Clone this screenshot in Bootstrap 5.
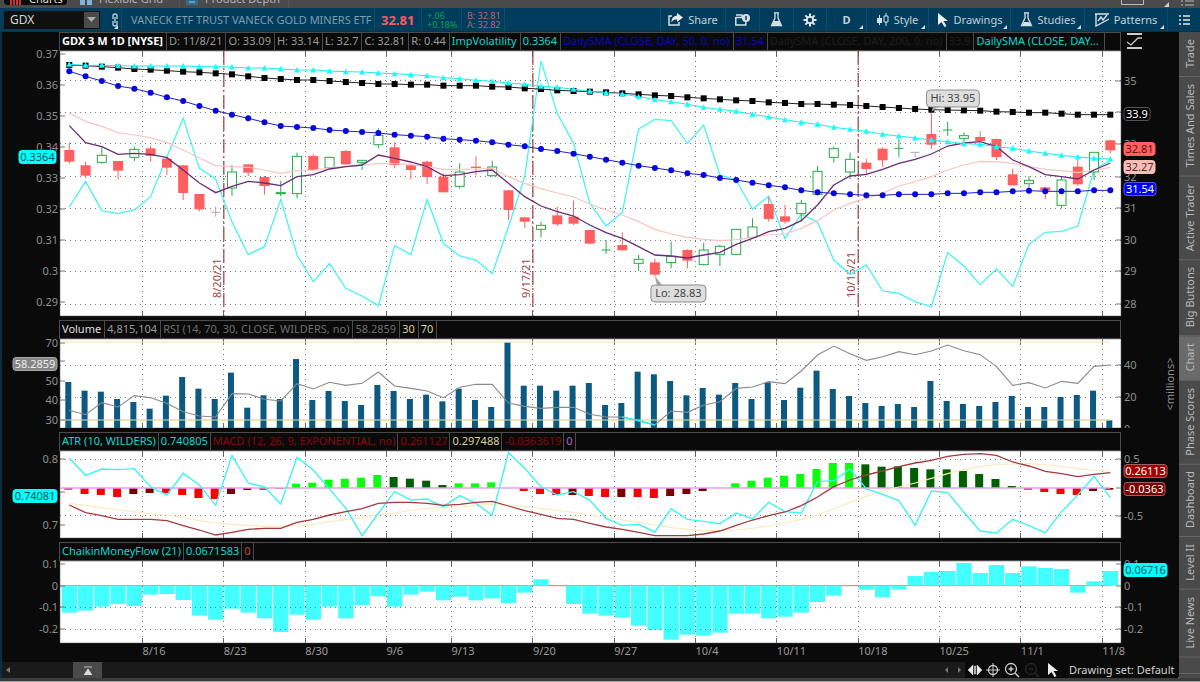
<!DOCTYPE html>
<html lang="en">
<head>
<meta charset="utf-8">
<meta name="viewport" content="width=device-width, initial-scale=1">
<title>GDX Charts</title>
<link href="https://cdn.jsdelivr.net/npm/bootstrap@5.3.0/dist/css/bootstrap.min.css" rel="stylesheet">
<style>
  body { background:#0a0a0a; color:#9a9a9a; font-family:"Noto Sans","Open Sans",sans-serif; font-size:11px; line-height:14px; }
  button { font:inherit; color:inherit; background:none; border:0; padding:0; }
  svg { display:block; flex-shrink:0; }
  .tabstrip { height:8px; background:#4a4a4a; color:#b5b5b5; font-size:11px; line-height:12px; }
  .tabstrip button { height:16px; padding:0 8px 3px 6px; gap:7px; border-right:1px solid #555; }
  .tabstrip .chart-tab { background:#0a0a0a; color:#ddd; border-radius:0 0 4px 4px; width:64px; margin:0 12px 3px 4px; padding-bottom:0; }
  .tabstrip .grid-tab { padding:0 16px 3px 0; }
  .toolbar { height:24px; background:#003d5c; color:#c3d0d8; border-bottom:1px solid #1d2b33; }
  .toolbar .cell { border-left:1px solid #0b4d6d; height:23px; }
  .symbol { width:96px; height:18px; background:#101010; margin:0 8px 0 4px; }
  .symbol input { width:80px; background:none; border:0; outline:0; color:#d5d5d5; font-size:12px; padding:0 0 0 6px; }
  .symbol button { width:15px; height:16px; background:#4a4a4a; margin-right:1px; }
  .company { color:#7f9cad; padding-left:9px; width:253px; }
  .lastprice { color:#ff5a64; font-size:13px; width:47px; padding-left:6px; }
  .two-line { font-size:9px; line-height:9px; padding-left:5px; }
  .w40 { width:40px; } .w43 { width:43px; }
  .up { color:#08a34c; } .quote { color:#c0606f; }
  .tool { position:relative; gap:5px; }
  .drop::after, .drop-mark { content:""; border:2px solid transparent; border-right-color:#d8e0e4; border-bottom-color:#d8e0e4; }
  .drop::after { position:absolute; right:3px; bottom:2px; }
  .t13 { width:13px; } .t33 { width:33px; } .t34 { width:34px; } .t40 { width:40px; } .t62 { width:62px; } .t65 { width:65px; }
  .t74 { width:74px; } .t82 { width:82px; } .t83 { width:83px; }
  .charts { border-left:2px solid #04303f; position:relative; }
  .strip { height:19px; margin:0 58px 0 57px; border:1px solid #4b4b4b; background:#0a0a0a; white-space:nowrap; overflow:hidden; line-height:16px; }
  .strip span { padding:0 2px; border-right:1px solid #4b4b4b; flex-shrink:0; overflow:hidden; text-overflow:ellipsis; }
  .strip-roomy span { padding-right:3px; }
  .plot { min-height:0; margin-bottom:4px; }
  .plot svg { width:100%; height:100%; }
  .plot-price { flex:265 1 0; } .plot-volume { flex:89 1 0; } .plot-macd { flex:87 1 0; } .plot-flow { flex:82 1 0; margin:0; }
  .plot-price svg, .plot-macd svg, .plot-flow svg { overflow:visible; }
  .dates { height:19px; } .dates svg { width:100%; height:19px; }
  .white { color:#fff; } .bold { font-weight:700; } .pale { color:#e0dfe2; } .aqua { color:#12d5d0; } .navy { color:#0808b8; }
  .ink { color:#1e1e1e; } .dim { color:#6e6e6e; } .cream { color:#d9d09a; } .wine { color:#860a0a; } .orchid { color:#b05fd0; } .brick { color:#c04848; }
  .w-sma { width:131px; }
  .sidetabs { width:21px; background:#4a4a4a; color:#b8b8b8; overflow:hidden; }
  .sidetabs button { writing-mode:vertical-rl; transform:rotate(180deg); width:21px; padding:8px 0 7px; border-top:1px solid #666; line-height:20px; white-space:nowrap; flex-shrink:0; }
  .sidetabs .current { background:#6a6a6a; }
  .footbar { height:16px; color:#cfcfcf; }
  .scroller { background:#1a1a1a; height:16px; padding-left:4px; }
  .scroller .thumb { width:29px; height:16px; background:#4a4a4a; margin-left:63px; }
  .draw-tools { gap:4px; padding:0 2px 0 3px; width:214px; }
  .baseline { height:4px; background:#3c3c3c; border-bottom:1px solid #9a9a9a; }
  text { font-family:"Noto Sans","Open Sans",sans-serif; font-size:11px; }
</style>
</head>
<body>
<div class="d-flex flex-column vh-100 overflow-hidden">
  <div class="tabstrip d-flex align-items-end overflow-hidden">
    <button class="chart-tab d-flex align-items-end"><svg width="12" height="12"><path d="M1 12V6M4 12V3M7 12V5M10 12V2" stroke="#c33" stroke-width="2"/></svg>Charts</button>
    <button class="grid-tab d-flex align-items-end"><svg width="12" height="12"><path d="M0 0h5v5H0zM7 0h5v5H7zM0 7h5v5H0zM7 7h5v5H7z" fill="#7fb0d8"/></svg>Flexible Grid</button>
    <button class="d-flex align-items-end"><svg width="12" height="12"><path d="M0 0h12v12H0z" fill="#2b6f93"/><path d="M3 6h6M3 9h6" stroke="#9cc"/></svg>Product Depth</button>
    <div class="ms-auto d-flex align-items-end h-100">
      <svg width="88" height="8"><path d="M9.500 0V4.500H31.500V0" fill="none" stroke="#bbb"/><path d="M57 2V7H52z" fill="#ccc"/><path d="M69 1h2M69 5h2M73 1h9M73 5h9" stroke="#bbb"/></svg>
    </div>
  </div>

  <div class="toolbar d-flex align-items-center flex-shrink-0">
    <div class="symbol d-flex align-items-center"><input aria-label="Symbol" value="GDX"><button aria-label="Symbol list" class="d-flex align-items-center justify-content-center"><svg width="9" height="5"><path d="M0 0H9L4.500 5z" fill="#aaa"/></svg></button></div>
    <button class="tool drop t13 h-100 d-flex justify-content-center align-items-center" aria-label="Link"><svg width="8" height="14"><path d="M2 6V2q2-2 4 0v4M2 8v4q2 2 4 0V8M4 4v6" fill="none" stroke="#b9c9d2" stroke-width="1.400"/></svg></button>
    <div class="company cell d-flex align-items-center text-nowrap">VANECK ETF TRUST VANECK GOLD MINERS ETF</div>
    <div class="lastprice cell d-flex align-items-center bold">32.81</div>
    <div class="two-line cell w40 up d-flex flex-column justify-content-center"><span>+.06</span><span>+0.18%</span></div>
    <div class="two-line cell w43 quote d-flex flex-column justify-content-center"><span>B: 32.81</span><span>A: 32.82</span></div>
    <div class="cell flex-grow-1"></div>
    <button class="tool cell t65 d-flex align-items-center justify-content-center"><svg width="15" height="13"><path d="M4 3H1v9h10V9" fill="none" stroke="#d6dfe4" stroke-width="1.500"/><path d="M9 0l6 4.500L9 9V6.500Q5 6 3.500 9.500 3.500 3 9 2.500z" fill="#e4eaed"/></svg>Share</button>
    <button class="tool cell t34 d-flex align-items-center justify-content-center" aria-label="Calendar"><svg width="15" height="12"><path d="M1 3.500h7M1 1h6v2M.8 3v8h10V8" fill="none" stroke="#d6dfe4" stroke-width="1.500"/><circle cx="11" cy="4" r="4" fill="#d6dfe4"/><path d="M11 2v4" stroke="#003d5c" stroke-width="1.500"/></svg></button>
    <button class="tool cell t34 d-flex align-items-center justify-content-center" aria-label="Studies setup"><svg width="13" height="15"><path d="M4 .8h5M5 1v5L1.500 13.500h10L8 6V1" fill="none" stroke="#d6dfe4" stroke-width="1.300"/><path d="M4 9h5l2 4H2z" fill="#d6dfe4"/></svg></button>
    <button class="tool cell t33 d-flex align-items-center justify-content-center" aria-label="Settings"><svg width="14" height="14" viewBox="-7 -7 14 14"><path d="M0-6.500V6.500M-6.500 0H6.500M-4.600-4.600L4.600 4.600M4.600-4.600L-4.600 4.600" stroke="#e4eaed" stroke-width="2"/><circle r="4" fill="#e4eaed"/><circle r="2.300" fill="#003d5c"/></svg></button>
    <button class="tool drop cell t40 bold d-flex align-items-center justify-content-center">D</button>
    <button class="tool drop cell t62 d-flex align-items-center justify-content-center"><svg width="12" height="13"><path d="M2.500 2v10M9 0v13" stroke="#d6dfe4"/><path d="M0 5h5v5H0z" fill="#d6dfe4"/><path d="M7 3h4v6H7z" fill="#003d5c" stroke="#d6dfe4"/></svg>Style</button>
    <button class="tool drop cell t82 d-flex align-items-center justify-content-center"><svg width="12" height="14"><path d="M1 0l10 8H6.500l3 5-2 1-3-5L1 12z" fill="#eef2f4"/></svg>Drawings</button>
    <button class="tool drop cell t74 d-flex align-items-center justify-content-center"><svg width="13" height="15"><path d="M4 .8h5M5 1v5L1.500 13.500h10L8 6V1" fill="none" stroke="#d6dfe4" stroke-width="1.300"/><path d="M4 10h5l2 3H2z" fill="#d6dfe4"/></svg>Studies</button>
    <button class="tool drop cell t83 d-flex align-items-center justify-content-center"><svg width="14" height="14"><path d="M0 1h14M1 1v12L14 6M3 8l3-4 2 3 4-5" fill="none" stroke="#d6dfe4" stroke-width="1.400"/></svg>Patterns</button>
    <button class="tool cell t33 d-flex align-items-center justify-content-center" aria-label="Menu"><svg width="11" height="10"><path d="M0 1h2M0 5h2M0 9h2M4 1h7M4 5h7M4 9h7" stroke="#e4eaed" stroke-width="1.500"/></svg></button>
  </div>

  <div class="d-flex flex-grow-1 overflow-hidden">
    <div class="charts d-flex flex-column flex-grow-1 overflow-hidden">
      <div class="strip strip-roomy d-flex"><span class="white bold">GDX 3 M 1D [NYSE]</span><span>D: 11/8/21</span><span>O: 33.09</span><span>H: 33.14</span><span>L: 32.7</span><span>C: 32.81</span><span>R: 0.44</span><span class="aqua">ImpVolatility</span><span class="aqua">0.3364</span><span class="navy">DailySMA (CLOSE, DAY, 50, 0, no)</span><span class="navy">31.54</span><span class="ink">DailySMA (CLOSE, DAY, 200, 0, no)</span><span class="ink">33.9</span><span class="aqua w-sma">DailySMA (CLOSE, DAY, 100, 0, no)</span></div>
      <div class="plot plot-price"><svg id="price"></svg></div>
      <div class="strip strip-roomy d-flex"><span class="pale">Volume</span><span>4,815,104</span><span class="dim">RSI (14, 70, 30, CLOSE, WILDERS, no)</span><span class="dim">58.2859</span><span class="cream">30</span><span class="cream">70</span></div>
      <div class="plot plot-volume"><svg id="volume"></svg></div>
      <div class="strip d-flex"><span class="aqua">ATR (10, WILDERS)</span><span class="aqua">0.740805</span><span class="wine">MACD (12, 26, 9, EXPONENTIAL, no)</span><span class="wine">0.261127</span><span class="cream">0.297488</span><span class="wine">-0.0363619</span><span class="orchid">0</span></div>
      <div class="plot plot-macd"><svg id="macd"></svg></div>
      <div class="strip d-flex"><span class="aqua">ChaikinMoneyFlow (21)</span><span class="aqua">0.0671583</span><span class="brick">0</span></div>
      <div class="plot plot-flow"><svg id="flow"></svg></div>
      <div class="dates"><svg id="dates"></svg></div>
      <div class="footbar d-flex align-items-center">
        <div class="scroller flex-grow-1 d-flex align-items-center">
          <svg width="4" height="6"><path d="M4 0v6L0 3z" fill="#777"/></svg>
          <button class="thumb d-flex align-items-center justify-content-center" aria-label="Expand"><svg width="8" height="9"><path d="M0 1h8M4 3l4 6H0z" fill="#ddd" stroke="#ddd" stroke-width=".8"/></svg></button>
          <svg class="ms-auto me-1" width="16" height="6"><path d="M3 0v6L0 3zM13 0v6l3-3z" fill="#777"/></svg>
        </div>
        <div class="draw-tools d-flex align-items-center text-nowrap">
          <svg width="14" height="10"><path d="M0 5l5-5v10zM14 5L9 0v10zM6.500 1h1v8h-1z" fill="#e8e8e8" stroke="#e8e8e8" stroke-width=".5"/></svg>
          <svg width="14" height="14"><path d="M7 0v14M0 7h14" stroke="#ccc"/><circle cx="7" cy="7" r="4.500" fill="none" stroke="#ccc" stroke-width="1.300"/></svg>
          <svg width="16" height="16"><circle cx="7" cy="7" r="5.500" fill="none" stroke="#ccc" stroke-width="1.300"/><path d="M4.500 7h5M7 4.500v5M11 11l4 4" stroke="#ccc" stroke-width="1.500"/></svg>
          <svg width="15" height="16"><circle cx="7" cy="7" r="5.500" fill="none" stroke="#262626" stroke-width="1.300"/><path d="M4.500 7h5M11 11l4 4" stroke="#262626" stroke-width="1.500"/></svg>
          <svg width="14" height="14" class="ms-1"><path d="M1 0l10 8H6.500l3 5-2 1-3-5L1 12z" fill="#eee"/></svg>
          <button class="ms-1">Drawing set: Default</button><span class="drop-mark align-self-end ms-auto"></span>
        </div>
      </div>
    </div>
    <nav class="sidetabs d-flex flex-column flex-shrink-0">
      <button>Trade</button><button>Times And Sales</button><button>Active Trader</button><button>Big Buttons</button><button class="current">Chart</button><button>Phase Scores</button><button>Dashboard</button><button>Level II</button><button>Live News</button><button aria-label="More tools"></button>
    </nav>
  </div>
  <div class="baseline flex-shrink-0"></div>
</div>

<script src="https://cdn.jsdelivr.net/npm/bootstrap@5.3.0/dist/js/bootstrap.bundle.min.js"></script>
<script>
// One value per trading day, in thirds of a pixel from the panel group's origin.
const sma200 = [45,47,50,53,57,59,62,65,67,70,73,79,84,87,90,90,93,96,99,102,102,104,104,107,107,107,110,111,115,117,121,123,125,127,130,133,136,138,142,145,148,151,153,157,159,162,162,164,165,168,171,174,177,179,180,181,182,185,186,188,188,191,194,194,194];
const sma100 = [43,46,46,47,48,48,48,48,50,50,51,54,54,57,60,60,63,65,66,69,71,74,77,83,86,91,94,99,103,109,112,118,124,128,132,140,149,155,163,172,178,184,193,201,209,217,223,232,238,244,253,258,264,270,275,281,283,290,295,303,310,316,321,325,327];
const sma50 = [64,79,93,108,116,128,142,153,168,182,194,205,217,228,231,234,240,243,246,249,254,257,260,266,269,272,277,284,289,297,303,311,320,329,338,347,354,361,370,375,384,390,398,406,412,421,427,430,433,436,436,433,433,433,430,430,427,427,424,422,424,424,424,421,421];
const slow = [190,214,229,248,255,263,277,300,324,347,350,352,360,370,362,360,355,350,346,340,341,343,350,358,358,357,355,380,400,416,429,441,462,480,495,515,538,552,562,568,572,569,562,555,552,535,512,480,460,445,430,408,395,380,360,345,334,335,340,350,358,362,368,360,352];
const fast = [227,278,290,313,310,313,323,360,399,428,409,394,399,407,380,374,357,350,345,315,325,336,350,377,374,365,360,400,440,468,485,498,525,548,565,590,615,618,624,615,607,583,565,545,535,512,465,405,378,373,358,340,328,312,288,279,275,290,330,350,374,380,387,360,339];
const impvol = [471,394,482,491,480,440,320,205,355,387,515,614,590,448,615,695,641,715,738,767,587,614,449,580,618,630,671,530,380,33,190,280,460,528,487,237,208,212,280,225,375,390,478,438,566,492,517,630,673,645,723,730,755,770,608,648,704,657,709,583,547,544,528,360,330];
// kind, body top, body bottom, high, low
const candles = 'r300,335,277,341 r346,377,335,384 g316,337,292,342 r333,362,333,388 g298,322,290,333 r295,318,288,335 r326,353,320,375 r346,429,346,450 r432,478,432,484 n487,487,470,500 g366,414,345,438 r343,368,343,378 r381,408,378,434 g428,431,392,438 g319,431,308,445 r318,360,312,362 g322,354,320,356 r303,343,299,345 g331,337,331,360 g256,284,235,295 r292,345,277,355 r346,360,343,388 r335,381,332,402 r380,427,370,427 g366,409,340,416 r350,354,319,376 g351,377,332,380 r421,480,421,510 r502,515,502,534 g526,538,515,562 r496,523,470,528 r500,521,452,525 r540,581,540,581 g600,600,570,612 r585,601,547,601 g628,640,615,663 r637,674,626,680 g619,638,575,655 r600,632,598,655 g600,644,578,646 g589,613,585,648 g538,613,537,616 g531,562,505,566 r462,507,441,515 r499,515,465,521 g460,491,450,515 g364,433,348,436 g296,322,290,338 g328,366,308,388 r338,357,327,372 r296,331,292,350 g295,295,268,322 n307,307,307,322 r252,284,190,297 g240,240,216,258 g257,265,247,280 r261,273,244,280 r267,321,265,330 r373,406,356,406 g391,401,378,430 r412,422,410,447 g390,466,378,475 r350,403,325,407 g307,366,307,390 r271,301,270,310'.split(' ').map(s => [s[0], ...s.slice(1).split(',').map(Number)]);
const volume = [201,227,230,252,261,281,242,186,221,252,173,278,241,252,132,255,228,258,270,210,228,252,239,259,221,255,276,83,212,212,227,212,204,270,264,170,178,198,241,219,239,204,252,202,255,218,167,222,243,264,273,267,276,198,258,267,273,261,243,276,276,246,240,227,316];
const rsi = [286,299,263,276,242,248,265,290,303,306,236,237,253,258,206,222,202,211,205,171,213,220,228,248,217,208,208,264,274,280,277,277,298,306,306,317,330,288,292,270,260,220,216,200,206,168,120,93,116,136,125,110,119,108,90,107,119,155,211,203,219,199,205,154,150];
const hist = 'r524 r537 r540 r546 m537 m534 r535 r540 r549 r552 m537 m525 m524 m521 g506 g503 g494 g491 g488 g480 d486 d491 d497 d510 g505 g505 g502 g519 r528 r537 r540 m540 r543 r546 m546 r546 r549 m543 m537 m528 g519 g505 g497 g488 g482 g477 g462 g444 g444 d448 d455 d454 d459 d463 d463 d468 d477 d492 d513 r524 r531 r537 r540 m528 m524'.split(' ');
const atr = [429,481,462,464,461,516,540,475,510,571,421,504,516,567,427,465,522,580,662,595,530,555,552,575,542,565,601,413,460,515,540,530,556,610,631,628,651,581,613,619,626,594,611,562,590,594,500,497,462,522,538,557,631,528,533,592,648,654,613,632,654,590,540,484,548];
const macd = [570,593,602,613,613,613,617,632,645,660,652,643,640,640,622,613,600,590,581,565,562,562,565,571,568,562,559,573,587,598,610,613,625,636,643,652,662,662,662,657,648,631,615,602,591,572,546,515,495,480,468,455,444,436,424,418,416,421,441,453,469,476,485,478,473];
const signal = [565,571,578,585,590,597,600,608,617,624,628,631,634,634,632,628,620,614,608,598,595,585,580,578,576,572,568,571,575,580,586,592,600,606,614,622,630,638,643,647,647,645,640,633,624,613,600,582,562,544,528,516,504,490,476,464,455,449,447,446,449,454,460,466,468];
const flow = [233,227,215,207,213,179,177,195,242,254,221,233,250,291,239,254,215,250,210,184,215,179,170,196,185,196,190,204,173,133,152,207,236,242,248,272,285,314,299,302,293,236,236,250,245,233,201,182,152,164,187,164,123,111,108,84,114,90,114,94,99,102,173,139,108];
const weeks = [[4.5,'8/16'],[9.5,'8/23'],[14.5,'8/30'],[19.5,'9/6'],[23.5,'9/13'],[28.5,'9/20'],[33.5,'9/27'],[38.5,'10/4'],[43.5,'10/11'],[48.5,'10/18'],[53.5,'10/25'],[58.5,'11/1'],[63.5,'11/8']];
const EDGE = 58;

function panel(id, top, height, base) {
  const svg = document.getElementById(id), box = svg.getBoundingClientRect();
  const W = box.width, H = box.height, plotW = W - 2 * EDGE, k = plotW / 1061;
  const P = { W, H, out: '', k };
  P.x = i => EDGE + (9.3 + i * 16.266) * k;
  P.y = v => (v - top) * H / height;            // absolute row
  P.z = v => P.y(v / 3 + base);                 // series value
  P.add = s => P.out += s;
  P.line = (x1, y1, x2, y2, c, w = 1, more = '') => P.add(`<line x1="${x1}" y1="${y1}" x2="${x2}" y2="${y2}" stroke="${c}" stroke-width="${w}" ${more}/>`);
  P.rect = (x, y, w, h, c, more = '') => P.add(`<rect x="${x}" y="${y}" width="${w}" height="${h}" fill="${c}" ${more}/>`);
  P.curve = (data, c, w = 1.2, from = 0) => P.add(`<polyline points="${data.map((v, i) => P.x(i + from) + ',' + P.z(v)).join(' ')}" fill="none" stroke="${c}" stroke-width="${w}"/>`);
  P.text = (x, y, s, c = '#8f8f8f', anchor = 'start', more = '') => P.add(`<text x="${x}" y="${y}" fill="${c}" text-anchor="${anchor}" ${more}>${s}</text>`);
  P.left = (y, s) => { P.line(EDGE, P.y(y), EDGE + 5, P.y(y), '#777'); if (s) P.text(EDGE - 2, P.y(y) + 4, s, '#8f8f8f', 'end'); };
  P.right = (y, s) => { P.line(W - EDGE - 5, P.y(y), W - EDGE, P.y(y), '#777'); if (s) P.text(W - EDGE + 3, P.y(y) + 4, s); };
  P.tag = (x, y, w, s, bg, fg, edge = bg) => { P.rect(x, P.y(y) - 6.5, w, 13, bg, `rx="3" stroke="${edge}"`); P.text(x + w / 2, P.y(y) + 4, s, fg, 'middle'); };
  P.grid = rows => {
    weeks.forEach(([i]) => { const x = Math.floor(P.x(i)) + .5; P.line(x, 0, x, H, '#777', 1, 'stroke-dasharray="1 4"'); P.line(x, 0, x, 5, '#666'); P.line(x, H - 5, x, H, '#666'); });
    rows.forEach(r => { const y = Math.floor(P.y(r)) + .5; P.line(EDGE, y, W - EDGE, y, '#777', 1, 'stroke-dasharray="1 4"'); });
  };
  P.done = () => svg.innerHTML = P.out;
  if (id !== 'dates') P.rect(EDGE, 0, plotW, H, '#fff', 'stroke="#555" stroke-width=".5"');
  return P;
}

function drawPrice() {
  const p = panel('price', 51, 265, 50);
  p.grid([80,112,143,176,208,240,271,304]);
  weeks.filter(w => [9.5,28.5,48.5].includes(w[0])).forEach(([i], n) => {
    const x = p.x(i);
    p.line(x, 0, x, p.H, '#a33a3a', 1.2, 'stroke-dasharray="14 3 2 3"');
    const y = p.y(298);
    p.text(x - 3, y, ['8/20/21','9/17/21','10/15/21'][n], '#a04848', 'start', `transform="rotate(-90 ${x - 3} ${y})"`);
  });
  p.curve(impvol, '#48f3f3', 1.3);
  candles.forEach(([k, t, b, h, l], i) => {
    const x = p.x(i), c = { r: '#ff5f5f', g: '#22ad45', n: '#aaa' }[k];
    if (k === 'g' && b > t) {
      p.line(x, p.z(h), x, p.z(t), c); p.line(x, p.z(b), x, p.z(l), c);
      p.rect(x - 4.5, p.z(t), 9, p.z(b) - p.z(t), '#fff', `stroke="${c}"`);
    } else {
      p.line(x, p.z(h), x, p.z(l), c);
      if (k === 'r') p.rect(x - 5, p.z(t), 10, p.z(b) - p.z(t), c); else p.line(x - 4.5, p.z(t), x + 4.5, p.z(t), c);
    }
  });
  p.curve(slow, '#f8c6c2'); p.curve(fast, '#6b2c78', 1.3);
  p.curve(sma200, '#222', 1);
  sma200.forEach((v, i) => p.rect(p.x(i) - 3, p.z(v) - 3, 6, 6, '#000'));
  p.curve(sma50, '#2020cc', 1);
  sma50.forEach((v, i) => p.add(`<circle cx="${p.x(i)}" cy="${p.z(v)}" r="3" fill="#0808dc"/>`));
  p.curve(sma100, '#20eaea', 1);
  sma100.forEach((v, i) => p.add(`<path d="M${p.x(i)} ${p.z(v) - 3}l3 5.500h-6z" fill="#1ff"/>`));
  ['0.37','0.36','0.35','0.34','0.33','0.32','0.31','0.3','0.29'].forEach((s, n) => p.left(54 + n * 31, s));
  [[81,'35'],[112,''],[144,'33'],[177,'32'],[208,'31'],[240,'30'],[271,'29'],[304,'28']].forEach(r => p.right(...r));
  const R = p.W - EDGE + 3;
  p.tag(17, 157, 37, '0.3364', '#0ff', '#055');
  p.tag(R, 114, 26, '33.9', '#000', '#fff', '#555');
  p.tag(R, 149, 31, '32.81', '#ff5f5f', '#5c1515');
  p.tag(R, 167, 31, '32.27', '#fbbcb6', '#4d2c2c');
  p.tag(R, 189, 32, '31.54', '#00f', '#fff', '#5a5ad0');
  const note = (i, y, dx, w, s, tipY) => {
    const x = p.x(i) + dx;
    p.rect(x, p.y(y), w, 17, '#dedede', 'rx="4" stroke="#8c8c8c"');
    const my = y > tipY ? p.y(y) + 1 : p.y(y) + 16;
    p.add(`<path d="M${p.x(i)} ${p.y(tipY)}L${p.x(i) + 2} ${my}h6z" fill="#a5a5a5"/>`);
    p.text(x + w / 2, p.y(y) + 12, s, '#444', 'middle');
  };
  note(53, 90, -5, 53, 'Hi: 33.95', 112);
  note(36, 285, -4, 55, 'Lo: 28.83', 276);
  // auto-scale toggle above the price axis
  const tx = p.W - EDGE + 6;
  p.add(`<path d="M${tx} -17h15M${tx} -3h15" fill="none" stroke="#ccc" stroke-width="2"/><path d="M${tx} -9l4 3 7-7h4" fill="none" stroke="#ccc" stroke-width="1.300"/>`);
  p.done();
}

function drawVolume() {
  const p = panel('volume', 339, 89, 315);
  p.grid([365,397]);
  [342,420].forEach(r => p.line(EDGE, p.y(r), p.x(64), p.y(r), '#f5e3b0', r > 400 ? 2 : 1));
  volume.forEach((v, i) => p.rect(p.x(i) - 4, p.z(v), 6, p.H - p.z(v), '#0d5a80'));
  p.line(EDGE, p.y(420), p.x(64), p.y(420), '#e8e2b4', 1);
  p.curve(rsi, '#8a8a8a', 1.1);
  p.curve(rsi.slice(34, 37), '#2ee', 1.5, 34);
  [[343,'70'],[361,''],[381,'50'],[400,'40'],[420,'30']].forEach(r => p.left(...r));
  [[365,'40'],[397,'20'],[429,'0']].forEach(r => p.right(...r));
  p.tag(11, 364, 44, '58.2859', '#858585', '#eee', '#aaa');
  const mx = p.W - 5, my = p.y(384);
  p.text(mx, my, '&lt;millions&gt;', '#8f8f8f', 'middle', `transform="rotate(-90 ${mx} ${my})"`);
  p.done();
}

function drawMacd() {
  const p = panel('macd', 451, 87, 315), zero = p.z(519);
  p.grid([459,515]);
  const tone = { r: '#fa0000', m: '#7a0000', g: '#0aff0a', d: '#006000' };
  hist.forEach((s, i) => { const y = p.z(+s.slice(1)); p.rect(p.x(i) - 5, Math.min(y, zero), 8, Math.abs(y - zero), tone[s[0]]); });
  p.line(EDGE, zero, p.x(64), zero, '#e79cf0', 1.3);
  p.curve(signal, '#faecc0'); p.curve(atr, '#40f3f3', 1.4); p.curve(macd, '#a33a3e', 1.3);
  [[459,'0.8'],[492,''],[525,'0.7']].forEach(r => p.left(...r));
  [[459,'0.5'],[488,''],[516,'-0.5']].forEach(r => p.right(...r));
  const R = p.W - EDGE + 3;
  p.tag(11, 496, 44, '0.74081', '#0ff', '#055');
  p.tag(R, 471, 43, '0.26113', '#a30000', '#fff', '#a06060');
  p.tag(R, 489, 41, '-0.0363', '#7c0000', '#fff', '#a06060');
  p.done();
}

function drawFlow() {
  const p = panel('flow', 561, 82, 535), zero = p.z(152);
  p.line(EDGE, zero, p.x(64), zero, '#f07070');
  flow.forEach((v, i) => { const y = p.z(v); p.rect(p.x(i) - 7.6 * p.k, Math.min(y, zero), 15.3 * p.k, Math.abs(y - zero), '#4ff'); });
  p.grid([607,629]);
  [[564,'0.1'],[586,'0'],[607,'-0.1'],[629,'-0.2']].forEach(r => { p.left(...r); p.right(...r); });
  p.tag(p.W - EDGE + 3, 570, 43, '0.06716', '#0ff', '#055');
  p.done();
}

function drawDates() {
  const p = panel('dates', 643, 19, 0);
  weeks.forEach(([i, s]) => p.text(p.x(i), 12, s, '#9a9a9a'));
  p.done();
}

function drawAll() { drawPrice(); drawVolume(); drawMacd(); drawFlow(); drawDates(); }
addEventListener('resize', drawAll);
drawAll();
</script>
</body>
</html>
